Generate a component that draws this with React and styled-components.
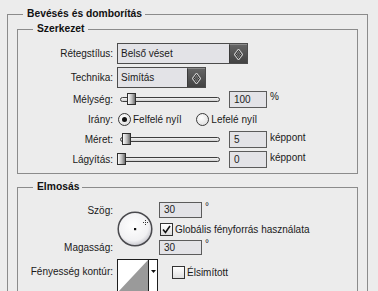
import React from 'react';
import styled, { createGlobalStyle } from 'styled-components';

const GlobalStyle = createGlobalStyle`
  html, body {
    margin: 0;
    padding: 0;
    background: #ececec;
  }
  body {
    font-family: "Liberation Sans", Arial, sans-serif;
    font-size: 10px;
    color: #1a1a1a;
  }
`;

const Panel = styled.div`
  width: 378px;
  height: 291px;
  overflow: hidden;
  box-sizing: border-box;
  padding-top: 8px;
`;

const Frame = styled.fieldset`
  margin: ${p => p.$top}px 0 0 ${p => p.$left}px;
  padding: 0;
  width: ${p => p.$width}px;
  box-sizing: border-box;
  border: 1px solid #8b8b8b;
  min-inline-size: 0;
`;

const Legend = styled.legend`
  margin-left: 15px;
  padding: 0 3px 0 4px;
  font-weight: bold;
  font-size: 10.3px;
  line-height: 12px;
  color: #111;
`;

const Stack = styled.div`
  display: flex;
  flex-direction: column;
  gap: 3px;
  padding: ${p => p.$pad};
`;

const Row = styled.div`
  display: grid;
  grid-template-columns: 95px 1fr;
  column-gap: 4px;
  align-items: center;
  height: ${p => p.$h}px;
`;

const Label = styled.span`
  text-align: right;
  white-space: nowrap;
`;

const Controls = styled.div`
  display: flex;
  align-items: center;
  height: 100%;
`;

const Select = styled.div`
  display: flex;
  width: ${p => p.$width}px;
  height: 21px;
  box-sizing: border-box;
  border: 1px solid #4c4c4c;
  background: #e3e3e7;
`;

const SelectText = styled.span`
  flex: 1;
  padding-left: 3px;
  line-height: 19px;
`;

const SelectButton = styled.span`
  width: 18px;
  display: flex;
  align-items: center;
  justify-content: center;
  box-sizing: border-box;
  border-left: 1px solid #3a3a3a;
  border-top: 1px solid #8a8a8a;
  background: linear-gradient(#646464, #424242);
`;

const Slider = styled.div`
  position: relative;
  width: 105px;
  height: 17px;
`;

const Track = styled.div`
  position: absolute;
  left: 3px;
  right: 2px;
  top: 6px;
  height: 5px;
  box-sizing: border-box;
  border: 1px solid #3e3e3e;
  border-radius: 3px;
  background: linear-gradient(#f4f4f4, #cfcfcf);
`;

const Thumb = styled.div`
  position: absolute;
  top: 2px;
  width: 9px;
  height: 12px;
  box-sizing: border-box;
  border: 1px solid #2e2e2e;
  background: linear-gradient(90deg, #fafafa, #bdbdbd 55%, #6c6c6c);
`;

const NumberBox = styled.div`
  width: ${p => p.$width}px;
  height: ${p => p.$h || 17}px;
  margin-left: ${p => p.$gap || 0}px;
  box-sizing: border-box;
  border: 1px solid #5b5b5b;
  background: #e3e3e7;
  padding-left: 4px;
  line-height: ${p => (p.$h || 17) - 2}px;
  color: #222;
`;

const Unit = styled.span`
  margin-left: 3px;
  position: relative;
  top: ${p => p.$shift}px;
`;

const Radio = styled.span`
  width: 13px;
  height: 13px;
  box-sizing: border-box;
  border-radius: 50%;
  border: 1px solid #3a3a3a;
  background: radial-gradient(circle at 40% 35%, #ffffff, #d8d8d8);
  display: flex;
  align-items: center;
  justify-content: center;
  margin-left: ${p => p.$gap || 0}px;

  &::after {
    content: '';
    width: 5px;
    height: 5px;
    border-radius: 50%;
    background: #111;
    display: ${p => (p.$checked ? 'block' : 'none')};
  }
`;

const OptionText = styled.span`
  margin-left: 2px;
  white-space: nowrap;
`;

const Check = styled.span`
  width: 13px;
  height: 13px;
  box-sizing: border-box;
  border: 1px solid #333;
  background: linear-gradient(#ffffff, #dedede);
  display: flex;
  align-items: center;
  justify-content: center;
  margin-left: ${p => p.$gap || 0}px;
`;

const BlurGrid = styled.div`
  display: grid;
  grid-template-columns: 95px 38px 1fr;
  grid-template-rows: 16px 14px 15px 34px;
  column-gap: 4px;
  row-gap: 4px;
  padding: 9px 0 0;
`;

const DialCell = styled.div`
  grid-column: 2;
  grid-row: 1 / span 3;
  align-self: center;
  width: 36px;
  height: 36px;
`;

const Cell = styled.div`
  grid-column: ${p => p.$col};
  grid-row: ${p => p.$row};
  display: flex;
  align-items: ${p => p.$align || 'center'};
  justify-content: ${p => (p.$right ? 'flex-end' : 'flex-start')};
  padding-top: ${p => p.$pt || 0}px;
`;

const Contour = styled.div`
  display: flex;
  width: 41px;
  height: 34px;
  box-sizing: border-box;
  border: 1px solid #1e1e1e;
  background: #fff;
`;

const ContourArrow = styled.span`
  flex: 1;
  border-left: 1px solid #1e1e1e;
  display: flex;
  justify-content: center;
  padding-top: 10px;
`;

const AntiAlias = styled.div`
  display: flex;
  align-items: center;
  margin-left: 14px;
  margin-top: 7px;
`;

function Diamond() {
  return (
    <svg width="9" height="11" viewBox="0 0 9 11">
      <polygon points="4.5,1 8,5.5 4.5,10 1,5.5" fill="none" stroke="#c8c8c8" strokeWidth="2.2" />
      <polygon points="4.5,1.5 7.4,5.5 4.5,9.5 1.6,5.5" fill="none" stroke="#111" strokeWidth="1" />
    </svg>
  );
}

function Dial() {
  return (
    <svg width="36" height="36" viewBox="0 0 36 36">
      <defs>
        <radialGradient id="dialFill" cx="45%" cy="40%" r="60%">
          <stop offset="0" stopColor="#ffffff" />
          <stop offset="0.75" stopColor="#f1f1f3" />
          <stop offset="1" stopColor="#c9c9cf" />
        </radialGradient>
      </defs>
      <circle cx="18" cy="18" r="16.8" fill="url(#dialFill)" stroke="#4a4a4e" strokeWidth="1.5" />
      <rect x="17" y="17" width="2.2" height="2.2" fill="#111" />
      <g fill="#333">
        <rect x="28" y="9" width="1" height="1" />
        <rect x="28" y="13" width="1" height="1" />
        <rect x="26" y="11" width="1" height="1" />
        <rect x="30" y="11" width="1" height="1" />
        <rect x="28" y="11" width="1" height="1" />
      </g>
    </svg>
  );
}

function Tick() {
  return (
    <svg width="11" height="11" viewBox="0 0 11 11">
      <path d="M2 5.5 L4.5 8.5 L9 2" fill="none" stroke="#111" strokeWidth="1.6" />
    </svg>
  );
}

function ContourPreview() {
  return (
    <svg width="30" height="32" viewBox="0 0 30 32">
      <rect width="30" height="32" fill="#fff" />
      <polygon points="0,32 30,0 30,32" fill="#9a9a9a" />
    </svg>
  );
}

function SliderRow({ label, pos, value, unit, shift }) {
  return (
    <Row $h={17}>
      <Label>{label}</Label>
      <Controls>
        <Slider>
          <Track />
          <Thumb style={{ left: pos }} />
        </Slider>
        <NumberBox $width={38} $gap={7}>{value}</NumberBox>
        <Unit $shift={shift}>{unit}</Unit>
      </Controls>
    </Row>
  );
}

export default function App() {
  return (
    <>
      <GlobalStyle />
      <Panel>
        <Frame $top={0} $left={7} $width={361}>
          <Legend>Bevésés és domborítás</Legend>

          <Frame $top={3} $left={9} $width={341}>
            <Legend>Szerkezet</Legend>
            <Stack $pad="8px 0 5px">
              <Row $h={21}>
                <Label>Rétegstílus:</Label>
                <Controls>
                  <Select $width={131}>
                    <SelectText>Belső véset</SelectText>
                    <SelectButton><Diamond /></SelectButton>
                  </Select>
                </Controls>
              </Row>
              <Row $h={21}>
                <Label>Technika:</Label>
                <Controls>
                  <Select $width={89}>
                    <SelectText>Simítás</SelectText>
                    <SelectButton><Diamond /></SelectButton>
                  </Select>
                </Controls>
              </Row>
              <SliderRow label="Mélység:" pos={10} value="100" unit="%" shift={-3} />
              <Row $h={17}>
                <Label>Irány:</Label>
                <Controls>
                  <Radio $checked $gap={1} />
                  <OptionText>Felfelé nyíl</OptionText>
                  <Radio $gap={15} />
                  <OptionText>Lefelé nyíl</OptionText>
                </Controls>
              </Row>
              <SliderRow label="Méret:" pos={5} value="5" unit="képpont" shift={-2} />
              <SliderRow label="Lágyítás:" pos={0} value="0" unit="képpont" shift={-2} />
            </Stack>
          </Frame>

          <Frame $top={7} $left={9} $width={341}>
            <Legend>Elmosás</Legend>
            <BlurGrid>
              <Cell $col={1} $row={1} $right>
                <Label>Szög:</Label>
              </Cell>
              <DialCell><Dial /></DialCell>
              <Cell $col={3} $row={1}>
                <NumberBox $width={43} $h={16}>30</NumberBox>
                <Unit $shift={-4}>°</Unit>
              </Cell>
              <Cell $col={3} $row={2}>
                <Check $gap={1}><Tick /></Check>
                <OptionText>Globális fényforrás használata</OptionText>
              </Cell>
              <Cell $col={1} $row={3} $right>
                <Label>Magasság:</Label>
              </Cell>
              <Cell $col={3} $row={3}>
                <NumberBox $width={43} $h={15}>30</NumberBox>
                <Unit $shift={-4}>°</Unit>
              </Cell>
              <Cell $col={1} $row={4} $right $align="flex-start" $pt={7}>
                <Label>Fényesség kontúr:</Label>
              </Cell>
              <Cell $col="2 / span 2" $row={4} $align="flex-start">
                <Contour>
                  <ContourPreview />
                  <ContourArrow>
                    <svg width="5" height="3" viewBox="0 0 5 3">
                      <polygon points="0,0 5,0 2.5,3" fill="#111" />
                    </svg>
                  </ContourArrow>
                </Contour>
                <AntiAlias>
                  <Check />
                  <OptionText>Élsimított</OptionText>
                </AntiAlias>
              </Cell>
            </BlurGrid>
          </Frame>
        </Frame>
      </Panel>
    </>
  );
}
